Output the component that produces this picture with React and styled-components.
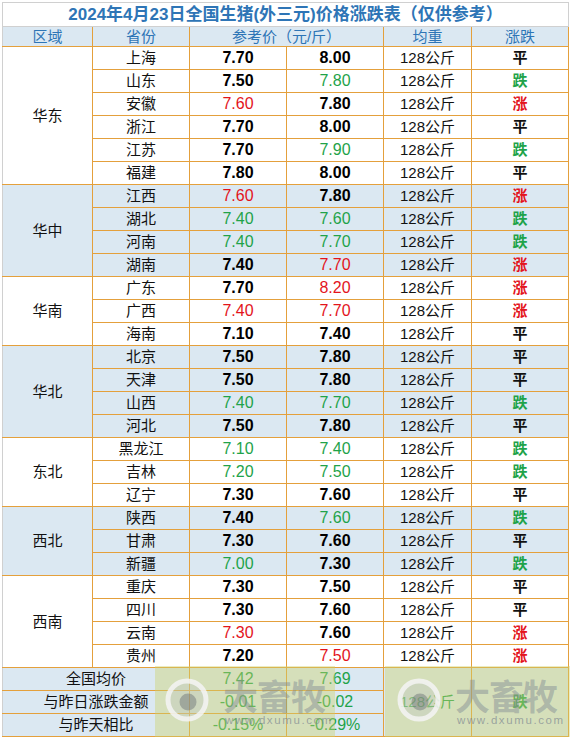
import React from "react";
import styled, { createGlobalStyle } from "styled-components";

const GlobalStyle = createGlobalStyle`
  body {
    margin: 0;
    background: #ffffff;
  }
`;

const ORANGE = "#e4a03c";
const GRID = "#d0d0d0";
const BLUE_BG = "#dbe8f2";
const RED = "#e3141c";
const GREEN = "#1fa34a";

const Page = styled.div`
  padding: 2px 0 0 2px;
  font-family: "Liberation Sans", "Noto Sans CJK SC", sans-serif;
`;

const Sheet = styled.div`
  position: relative;
  width: 566px;
`;

const Table = styled.table`
  border-collapse: collapse;
  table-layout: fixed;
  width: 566px;
`;

const TitleCell = styled.td`
  height: 23px;
  padding: 0;
  border: 1px solid ${GRID};
  text-align: center;
  color: #2e75b6;
  font-size: 17px;
  line-height: 20px;
  font-weight: bold;
  white-space: nowrap;
`;

const HeadRow = styled.tr`
  height: 20px;
  background: ${BLUE_BG};
`;

const HeadCell = styled.td`
  padding: 0;
  border: 1px solid ${ORANGE};
  border-left-color: ${(p) => (p.$first ? GRID : ORANGE)};
  text-align: center;
  color: #2e75b6;
  font-size: 15px;
  line-height: 17px;
`;

const Row = styled.tr`
  height: 23px;
  background: ${(p) => (p.$shade ? BLUE_BG : "#ffffff")};
`;

const Cell = styled.td`
  padding: 0;
  border: 1px solid ${ORANGE};
  border-left-color: ${(p) => (p.$first ? GRID : ORANGE)};
  text-align: center;
  font-size: 15px;
  line-height: 18px;
  color: ${(p) => (p.$tone === "up" ? RED : p.$tone === "down" ? GREEN : "#111")};
  font-weight: ${(p) => (p.$bold ? "bold" : "normal")};
  white-space: nowrap;
`;

const Price = styled(Cell)`
  font-size: 16px;
  font-weight: ${(p) => (p.$tone ? "normal" : "bold")};
  color: ${(p) => (p.$tone === "up" ? RED : p.$tone === "down" ? GREEN : "#000")};
`;

const FootRow = styled.tr`
  height: 23px;
  background: ${BLUE_BG};
`;

const Watermark = styled.div`
  position: absolute;
  top: 664px;
  left: ${(p) => p.$left}px;
  width: ${(p) => p.$width}px;
  height: 75px;
  background: rgba(206, 210, 110, 0.42);
  pointer-events: none;
  display: flex;
  align-items: flex-start;
`;

const Logo = styled.svg`
  flex: none;
  margin: 10px 0 0 ${(p) => p.$offset}px;
`;

const MarkText = styled.div`
  display: flex;
  flex-direction: column;
  align-items: flex-start;
  margin-left: ${(p) => p.$gap}px;
  padding-top: 11px;
  color: rgba(125, 135, 145, 0.45);
`;

const MarkName = styled.span`
  font-family: "Noto Sans CJK SC", sans-serif;
  font-size: 35px;
  font-weight: bold;
  line-height: 36px;
  letter-spacing: -1px;
`;

const MarkUrl = styled.span`
  font-family: "Liberation Sans", sans-serif;
  font-size: 11.5px;
  line-height: 14px;
  letter-spacing: 1.6px;
  margin-left: 2px;
  color: rgba(125, 135, 145, 0.7);
`;

const groups = [
  {
    name: "华东",
    rows: [
      ["上海", "7.70", "", "8.00", "", "平"],
      ["山东", "7.50", "", "7.80", "down", "跌"],
      ["安徽", "7.60", "up", "7.80", "", "涨"],
      ["浙江", "7.70", "", "8.00", "", "平"],
      ["江苏", "7.70", "", "7.90", "down", "跌"],
      ["福建", "7.80", "", "8.00", "", "平"],
    ],
  },
  {
    name: "华中",
    rows: [
      ["江西", "7.60", "up", "7.80", "", "涨"],
      ["湖北", "7.40", "down", "7.60", "down", "跌"],
      ["河南", "7.40", "down", "7.70", "down", "跌"],
      ["湖南", "7.40", "", "7.70", "up", "涨"],
    ],
  },
  {
    name: "华南",
    rows: [
      ["广东", "7.70", "", "8.20", "up", "涨"],
      ["广西", "7.40", "up", "7.70", "up", "涨"],
      ["海南", "7.10", "", "7.40", "", "平"],
    ],
  },
  {
    name: "华北",
    rows: [
      ["北京", "7.50", "", "7.80", "", "平"],
      ["天津", "7.50", "", "7.80", "", "平"],
      ["山西", "7.40", "down", "7.70", "down", "跌"],
      ["河北", "7.50", "", "7.80", "", "平"],
    ],
  },
  {
    name: "东北",
    rows: [
      ["黑龙江", "7.10", "down", "7.40", "down", "跌"],
      ["吉林", "7.20", "down", "7.50", "down", "跌"],
      ["辽宁", "7.30", "", "7.60", "", "平"],
    ],
  },
  {
    name: "西北",
    rows: [
      ["陕西", "7.40", "", "7.60", "down", "跌"],
      ["甘肃", "7.30", "", "7.60", "", "平"],
      ["新疆", "7.00", "down", "7.30", "", "跌"],
    ],
  },
  {
    name: "西南",
    rows: [
      ["重庆", "7.30", "", "7.50", "", "平"],
      ["四川", "7.30", "", "7.60", "", "平"],
      ["云南", "7.30", "up", "7.60", "", "涨"],
      ["贵州", "7.20", "", "7.50", "up", "涨"],
    ],
  },
];

const trendTone = { 涨: "up", 跌: "down", 平: "" };

const footer = [
  ["全国均价", "7.42", "7.69"],
  ["与昨日涨跌金额", "-0.01", "-0.02"],
  ["与昨天相比", "-0.15%", "-0.29%"],
];

function MarkLogo({ offset }) {
  return (
    <Logo $offset={offset} width="48" height="48" viewBox="0 0 48 48">
      <circle cx="24" cy="24" r="19" fill="rgba(190,195,200,0.3)" stroke="rgba(245,245,245,0.85)" strokeWidth="5" />
      <circle cx="25" cy="26" r="8.5" fill="rgba(105,110,115,0.45)" />
    </Logo>
  );
}

export default function App() {
  return (
    <Page>
      <GlobalStyle />
      <Sheet>
        <Table>
          <colgroup>
            <col style={{ width: 90 }} />
            <col style={{ width: 97 }} />
            <col style={{ width: 97 }} />
            <col style={{ width: 97 }} />
            <col style={{ width: 88 }} />
            <col style={{ width: 97 }} />
          </colgroup>
          <tbody>
            <tr>
              <TitleCell colSpan={6}>2024年4月23日全国生猪(外三元)价格涨跌表（仅供参考）</TitleCell>
            </tr>
            <HeadRow>
              <HeadCell $first>区域</HeadCell>
              <HeadCell>省份</HeadCell>
              <HeadCell colSpan={2}>参考价（元/斤）</HeadCell>
              <HeadCell>均重</HeadCell>
              <HeadCell>涨跌</HeadCell>
            </HeadRow>
            {groups.map((g, gi) =>
              g.rows.map((r, ri) => (
                <Row key={r[0]} $shade={gi % 2 === 1}>
                  {ri === 0 && (
                    <Cell $first rowSpan={g.rows.length}>
                      {g.name}
                    </Cell>
                  )}
                  <Cell>{r[0]}</Cell>
                  <Price $tone={r[2]}>{r[1]}</Price>
                  <Price $tone={r[4]}>{r[3]}</Price>
                  <Cell>128公斤</Cell>
                  <Cell $bold $tone={trendTone[r[5]]}>
                    {r[5]}
                  </Cell>
                </Row>
              ))
            )}
            {footer.map((f, i) => (
              <FootRow key={f[0]}>
                <Cell $first colSpan={2}>
                  {f[0]}
                </Cell>
                <Price $tone="down">{f[1]}</Price>
                <Price $tone="down">{f[2]}</Price>
                {i === 0 && (
                  <>
                    <Cell rowSpan={3} $tone="down">
                      128公斤
                    </Cell>
                    <Cell rowSpan={3} $bold $tone="down">
                      跌
                    </Cell>
                  </>
                )}
              </FootRow>
            ))}
          </tbody>
        </Table>
        <Watermark $left={153} $width={180}>
          <MarkLogo offset={8} />
          <MarkText $gap={12}>
            <MarkName>大畜牧</MarkName>
            <MarkUrl>www.dxumu.com</MarkUrl>
          </MarkText>
        </Watermark>
        <Watermark $left={383} $width={190}>
          <MarkLogo offset={10} />
          <MarkText $gap={12}>
            <MarkName>大畜牧</MarkName>
            <MarkUrl>www.dxumu.com</MarkUrl>
          </MarkText>
        </Watermark>
      </Sheet>
    </Page>
  );
}
